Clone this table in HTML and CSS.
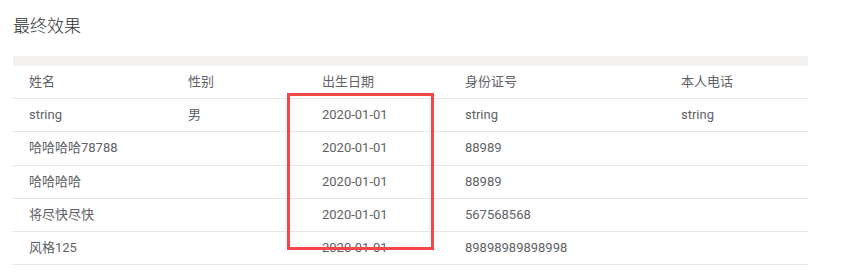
FILE: index.html
```html
<!DOCTYPE html>
<html lang="zh">
<head>
<meta charset="utf-8">
<link rel="stylesheet" href="styles.css">
</head>
<body>
<div class="page">
  <h2 class="title">最终效果</h2>
  <div class="table-wrap">
    <div class="band"></div>
    <div class="row head">
      <div class="cell">姓名</div>
      <div class="cell">性别</div>
      <div class="cell">出生日期</div>
      <div class="cell">身份证号</div>
      <div class="cell">本人电话</div>
    </div>
    <div class="row">
      <div class="cell">string</div>
      <div class="cell">男</div>
      <div class="cell">2020-01-01</div>
      <div class="cell">string</div>
      <div class="cell">string</div>
    </div>
    <div class="row">
      <div class="cell">哈哈哈哈78788</div>
      <div class="cell"></div>
      <div class="cell">2020-01-01</div>
      <div class="cell">88989</div>
      <div class="cell"></div>
    </div>
    <div class="row">
      <div class="cell">哈哈哈哈</div>
      <div class="cell"></div>
      <div class="cell">2020-01-01</div>
      <div class="cell">88989</div>
      <div class="cell"></div>
    </div>
    <div class="row">
      <div class="cell">将尽快尽快</div>
      <div class="cell"></div>
      <div class="cell">2020-01-01</div>
      <div class="cell">567568568</div>
      <div class="cell"></div>
    </div>
    <div class="row">
      <div class="cell">风格125</div>
      <div class="cell"></div>
      <div class="cell">2020-01-01</div>
      <div class="cell">89898989898998</div>
      <div class="cell"></div>
    </div>
    <div class="highlight"></div>
  </div>
</div>
</body>
</html>
```

FILE: styles.css
```css
* { box-sizing: border-box; }
html, body { margin: 0; padding: 0; background: #fff; }
body {
  font-family: Roboto, "Noto Sans CJK SC", sans-serif;
  color: #606266;
}
.page {
  padding: 0 39px 0 13px;
  width: 847px;
}
.title {
  margin: 0;
  padding-top: 15px;
  height: 56px;
  font-family: "Noto Sans CJK SC", sans-serif;
  font-size: 17px;
  line-height: 20px;
  font-weight: 300;
  color: #303133;
}
.table-wrap {
  position: relative;
  width: 795px;
}
.band {
  height: 10px;
  background: #f2f1f0;
}
.row {
  display: grid;
  grid-template-columns: 159px 134px 143px 216px 143px;
  height: 33.2px;
  border-bottom: 1px solid #e6e6e6;
  font-size: 13px;
  align-items: center;
}
.cell {
  padding-left: 16px;
  line-height: 16px;
  white-space: nowrap;
}
.highlight {
  position: absolute;
  left: 274px;
  top: 37px;
  width: 147px;
  height: 157px;
  border: 3px solid #f5474a;
}
```
